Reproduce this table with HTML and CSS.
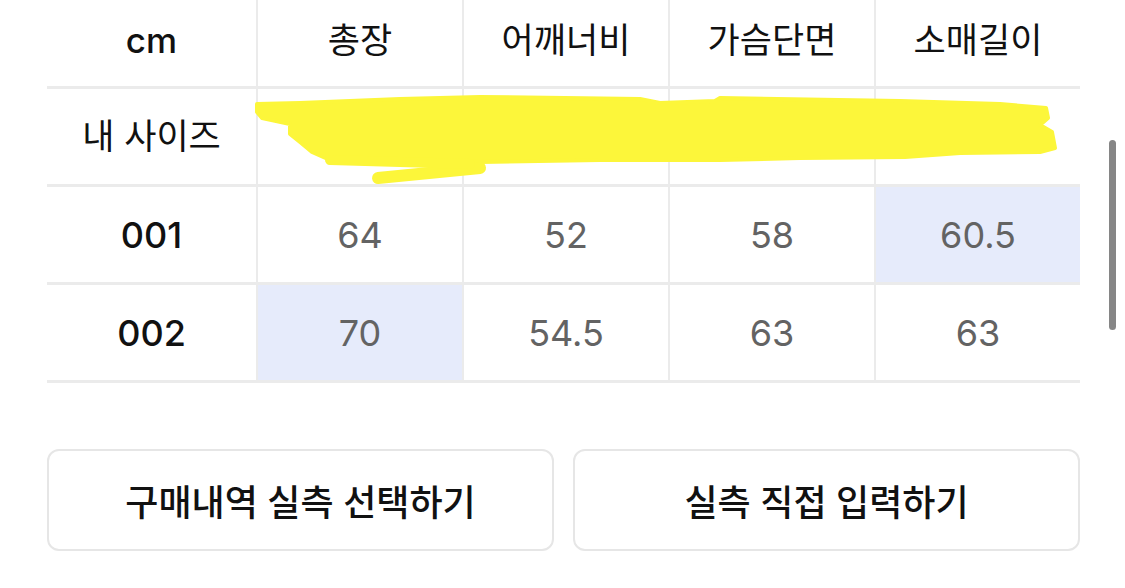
FILE: index.html
```html
<!DOCTYPE html>
<html lang="ko">
<head>
<meta charset="utf-8">
<title>실측 사이즈</title>
<link rel="stylesheet" href="styles.css">
</head>
<body>
<div class="page">
  <div class="size-table">
    <div class="cell head label">cm</div>
    <div class="cell head">총장</div>
    <div class="cell head">어깨너비</div>
    <div class="cell head">가슴단면</div>
    <div class="cell head">소매길이</div>

    <div class="cell label label-ko">내 사이즈</div>
    <div class="cell value"></div>
    <div class="cell value"></div>
    <div class="cell value"></div>
    <div class="cell value"></div>

    <div class="cell label">001</div>
    <div class="cell value">64</div>
    <div class="cell value">52</div>
    <div class="cell value">58</div>
    <div class="cell value match">60.5</div>

    <div class="cell label">002</div>
    <div class="cell value match">70</div>
    <div class="cell value">54.5</div>
    <div class="cell value">63</div>
    <div class="cell value">63</div>
  </div>

  <svg class="scribble" viewBox="0 0 1125 200" width="1125" height="200" aria-hidden="true">
    <g fill="#fcf63a" stroke="#fcf63a" stroke-linecap="round" stroke-linejoin="round">
      <path stroke-width="4" d="M257 104 L300 103 L400 99 L480 97 L640 99 L660 103 L715 101 L720 98 L900 101 L1000 104 L1046 108 L1048 118 L1040 125 L1052 132 L1055 148 L1040 152 L960 153 L905 157 L800 158 L720 160 L600 160 L480 162 L330 160 L312 152 L300 142 L290 134 L290 124 L262 118 L257 112 Z"/>
      <path fill="none" stroke-width="12" d="M378 178 L480 168"/>
      <path fill="none" stroke-width="10" d="M330 160 L470 164"/>
    </g>
  </svg>

  <div class="actions">
    <button class="btn">구매내역 실측 선택하기</button>
    <button class="btn">실측 직접 입력하기</button>
  </div>

  <div class="scrollbar"></div>
</div>
</body>
</html>
```

FILE: styles.css
```css
* {
  box-sizing: border-box;
}

html, body {
  margin: 0;
  padding: 0;
  background: #ffffff;
  overflow: hidden;
}

body {
  font-family: "Inter", "Noto Sans CJK KR", sans-serif;
  color: #111111;
}

.page {
  position: relative;
  width: 1125px;
  height: 588px;
  padding-left: 47px;
}

.size-table {
  display: grid;
  grid-template-columns: 209px repeat(4, 206px);
  grid-template-rows: 89px repeat(3, 98px);
  width: 1033px;
}

.cell {
  display: flex;
  align-items: center;
  justify-content: center;
  border-bottom: 3px solid #ebebeb;
  font-size: 36px;
  line-height: 1;
}

.cell:not(.label) {
  border-left: 2px solid #ebebeb;
}

.head {
  font-size: 35px;
  font-weight: 400;
  color: #111111;
  padding-bottom: 6px;
}

.label {
  font-weight: 500;
  color: #111111;
}

.head.label {
  font-size: 35px;
  font-weight: 500;
}

.label-ko {
  font-size: 35px;
  font-weight: 400;
}

.value {
  color: #636363;
  font-weight: 400;
}

.match {
  background: #e6ebfb;
}

.scribble {
  position: absolute;
  left: 0;
  top: 0;
  pointer-events: none;
}

.actions {
  display: flex;
  gap: 19px;
  width: 1033px;
  margin-top: 66px;
}

.btn {
  flex: 1;
  height: 102px;
  border: 2px solid #e6e6e6;
  border-radius: 12px;
  background: #ffffff;
  font-family: "Inter", "Noto Sans CJK KR", sans-serif;
  font-size: 36px;
  font-weight: 500;
  color: #111111;
  padding: 0;
}

.scrollbar {
  position: absolute;
  left: 1109px;
  top: 140px;
  width: 7px;
  height: 190px;
  border-radius: 4px;
  background: #868686;
}
```
